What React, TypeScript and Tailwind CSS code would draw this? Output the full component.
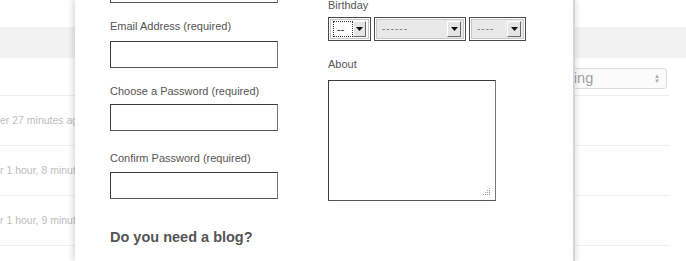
import React from 'react';

const font = { fontFamily: '"Liberation Sans", Arial, sans-serif' };

const rows = ['er 27 minutes ago', 'r 1 hour, 8 minutes ago', 'r 1 hour, 9 minutes ago'];

const Arrow = () => (
  <div className="w-[14px] h-[16px] bg-[#e4e4e4] border-t border-l border-t-white border-l-white border-b border-r border-b-[#6b6b6b] border-r-[#6b6b6b] flex items-center justify-center">
    <svg width="7" height="4" viewBox="0 0 7 4"><path d="M0 0h7L3.5 4z" fill="#111" /></svg>
  </div>
);

const Select = ({ width, label, focused }: { width: string; label: string; focused?: boolean }) => (
  <div className={`${width} h-[24px] border border-[#4a4a4a] p-[1px]`}>
    <div className={`h-full w-full border border-[#c8c8c8] flex items-center justify-between pl-[2px] pr-[2px] ${focused ? 'bg-white' : 'bg-[#e9e9e9]'}`}>
      {focused ? (
        <div className="h-[16px] w-[22px] border border-dotted border-[#333] flex items-center pl-[3px] text-[11px] leading-none text-[#222]">--</div>
      ) : (
        <span className="pl-[3px] text-[10px] leading-none text-[#777] tracking-[1px]">{label}</span>
      )}
      <Arrow />
    </div>
  </div>
);

const Label = ({ children, className = '' }: { children: React.ReactNode; className?: string }) => (
  <div className={`text-[11px] leading-[14px] text-[#555] ${className}`}>{children}</div>
);

const Input = ({ className = '' }: { className?: string }) => (
  <div className={`w-[168px] h-[27px] border border-[#3c3c3c] border-r-[#777] border-b-[#555] bg-white ${className}`} />
);

export default function App() {
  return (
    <div className="relative w-[686px] h-[261px] overflow-hidden bg-white" style={font}>
      {/* page behind the dialog */}
      <div className="h-[27px]" />
      <div className="h-[31px] bg-[#f2f2f2]" />
      <div className="h-[37px] flex items-start pt-[10px] w-[670px] justify-end pr-[3px]">
        <div className="w-[130px] h-[21px] rounded-[3px] border border-[#dcdcdc] bg-[#fbfbfb] flex items-center justify-between pl-[2px] pr-[6px]">
          <span className="text-[14.5px] text-[#a0a0a0]">Ranking</span>
          <span className="text-[6px] leading-[5px] text-[#aaa] flex flex-col">
            <span>▲</span>
            <span>▼</span>
          </span>
        </div>
      </div>
      {rows.map((r) => (
        <div key={r} className="w-[670px] h-[50px] border-t border-[#eeeeee] flex items-center">
          <span className="text-[10.5px] text-[#bdbdbd] whitespace-nowrap">{r}</span>
        </div>
      ))}
      <div className="w-[670px] border-t border-[#eeeeee]" />

      {/* dialog */}
      <div className="absolute top-0 left-[75px] w-[500px] h-[261px] bg-white border-r-[2px] border-[#d6d6d6] shadow-[-3px_0_5px_rgba(0,0,0,0.12),3px_0_4px_rgba(0,0,0,0.08)] flex">
        <div className="w-[253px] pl-[35px] flex flex-col mt-[-24px]">
          <Input />
          <Label className="mt-[16px]">Email Address (required)</Label>
          <Input className="mt-[8px]" />
          <Label className="mt-[16px]">Choose a Password (required)</Label>
          <Input className="mt-[6px]" />
          <Label className="mt-[20px]">Confirm Password (required)</Label>
          <Input className="mt-[7px]" />
          <div className="mt-[29px] text-[14.5px] leading-[18px] font-bold text-[#555]">Do you need a blog?</div>
        </div>
        <div className="flex flex-col mt-[-2px]">
          <Label>Birthday</Label>
          <div className="mt-[5px] flex gap-[3px]">
            <Select width="w-[43px]" label="--" focused />
            <Select width="w-[92px]" label="------" />
            <Select width="w-[57px]" label="----" />
          </div>
          <Label className="mt-[16px]">About</Label>
          <div className="mt-[9px] w-[168px] h-[121px] border border-[#3c3c3c] border-r-[#777] border-b-[#555] bg-white relative">
            <svg className="absolute right-[4px] bottom-[4px]" width="8" height="8" viewBox="0 0 8 8">
              <g fill="#999">
                <rect x="6" y="0" width="1" height="1" />
                <rect x="4" y="2" width="1" height="1" />
                <rect x="6" y="2" width="1" height="1" />
                <rect x="2" y="4" width="1" height="1" />
                <rect x="4" y="4" width="1" height="1" />
                <rect x="6" y="4" width="1" height="1" />
                <rect x="0" y="6" width="1" height="1" />
                <rect x="2" y="6" width="1" height="1" />
                <rect x="4" y="6" width="1" height="1" />
                <rect x="6" y="6" width="1" height="1" />
              </g>
            </svg>
          </div>
        </div>
      </div>
    </div>
  );
}
